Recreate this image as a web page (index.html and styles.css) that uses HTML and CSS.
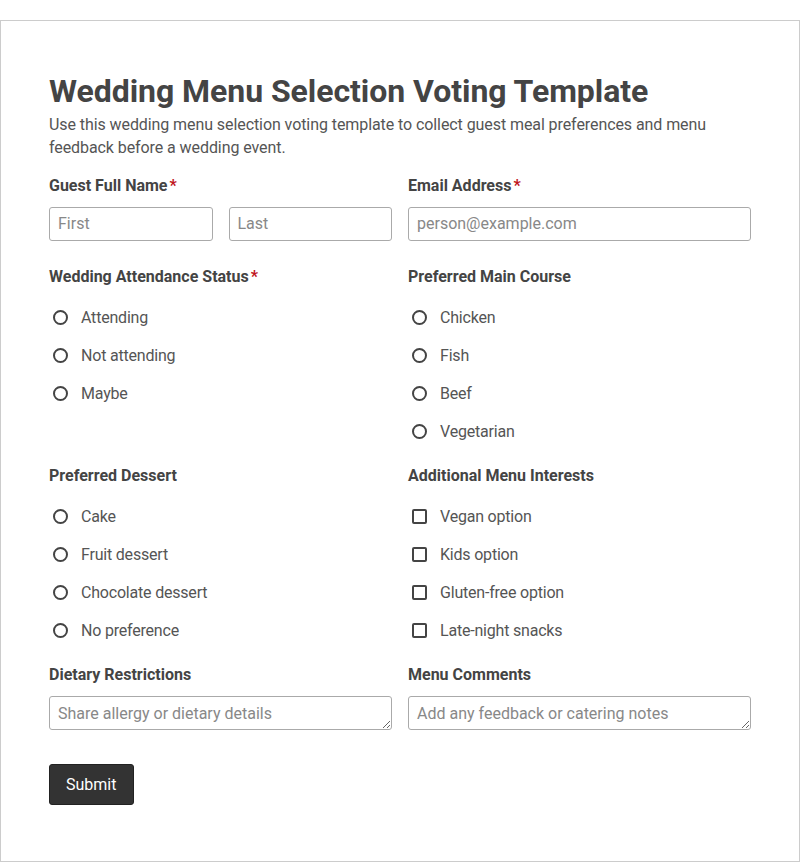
FILE: index.html
```html
<!DOCTYPE html>
<html lang="en">
<head>
    <meta charset="UTF-8">
    <meta name="viewport" content="width=device-width, initial-scale=1.0">
    <title>Wedding Menu Selection Voting Template</title>
    <link rel="stylesheet" href="styles.css">
</head>
<body>
    <form class="form-box">
        <h1>Wedding Menu Selection Voting Template</h1>
        <p class="intro">Use this wedding menu selection voting template to collect guest meal preferences and menu feedback before a wedding event.</p>

        <div class="grid">
            <div class="field text-field">
                <label class="label">Guest Full Name<span class="req">*</span></label>
                <div class="name-row">
                    <input type="text" placeholder="First">
                    <input type="text" placeholder="Last">
                </div>
            </div>
            <div class="field text-field">
                <label class="label">Email Address<span class="req">*</span></label>
                <input type="email" placeholder="person@example.com">
            </div>

            <div class="field">
                <label class="label">Wedding Attendance Status<span class="req">*</span></label>
                <div class="options">
                    <label class="option"><input type="radio" name="attend"> Attending</label>
                    <label class="option"><input type="radio" name="attend"> Not attending</label>
                    <label class="option"><input type="radio" name="attend"> Maybe</label>
                </div>
            </div>
            <div class="field">
                <label class="label">Preferred Main Course</label>
                <div class="options">
                    <label class="option"><input type="radio" name="main"> Chicken</label>
                    <label class="option"><input type="radio" name="main"> Fish</label>
                    <label class="option"><input type="radio" name="main"> Beef</label>
                    <label class="option"><input type="radio" name="main"> Vegetarian</label>
                </div>
            </div>

            <div class="field">
                <label class="label">Preferred Dessert</label>
                <div class="options">
                    <label class="option"><input type="radio" name="dessert"> Cake</label>
                    <label class="option"><input type="radio" name="dessert"> Fruit dessert</label>
                    <label class="option"><input type="radio" name="dessert"> Chocolate dessert</label>
                    <label class="option"><input type="radio" name="dessert"> No preference</label>
                </div>
            </div>
            <div class="field">
                <label class="label">Additional Menu Interests</label>
                <div class="options">
                    <label class="option"><input type="checkbox"> Vegan option</label>
                    <label class="option"><input type="checkbox"> Kids option</label>
                    <label class="option"><input type="checkbox"> Gluten-free option</label>
                    <label class="option"><input type="checkbox"> Late-night snacks</label>
                </div>
            </div>

            <div class="field">
                <label class="label">Dietary Restrictions</label>
                <textarea rows="1" placeholder="Share allergy or dietary details"></textarea>
            </div>
            <div class="field">
                <label class="label">Menu Comments</label>
                <textarea rows="1" placeholder="Add any feedback or catering notes"></textarea>
            </div>
        </div>

        <button type="submit" class="btn">Submit</button>
    </form>
</body>
</html>
```

FILE: styles.css
```css
body {
    margin: 0;
    padding-top: 20px;
    font-family: Roboto, "Liberation Sans", sans-serif;
    color: #444;
    background: #fff;
}
.form-box {
    border: 1px solid #ccc;
    padding: 50px 48px 56px;
}
h1 {
    font-size: 32px;
    line-height: 40px;
    font-weight: 700;
    margin: 0;
    color: #444;
    letter-spacing: -0.05px;
}
.intro {
    font-size: 16px;
    line-height: 23px;
    margin: 2px 0 16px;
    color: #555;
    letter-spacing: -0.08px;
}
.grid {
    display: grid;
    grid-template-columns: 343px 343px;
    column-gap: 16px;
    row-gap: 19px;
}
.label {
    display: block;
    font-size: 16px;
    line-height: 22px;
    font-weight: 700;
    color: #444;
}
.req {
    color: #c0141c;
    margin-left: 2px;
}
input[type="text"], input[type="email"], textarea {
    box-sizing: border-box;
    width: 100%;
    height: 34px;
    margin-top: 10px;
    padding: 5px 8px 7px;
    font-family: Roboto, "Liberation Sans", sans-serif;
    font-size: 16px;
    line-height: 20px;
    color: #444;
    border: 1px solid #aaa;
    border-radius: 3px;
    background: #fff;
    display: block;
}
textarea {
    resize: vertical;
    padding: 7px 8px 5px;
}
::placeholder {
    color: #888;
}
.text-field {
    padding-bottom: 6px;
}
.name-row {
    display: flex;
    gap: 16px;
}
.options {
    display: flex;
    flex-direction: column;
    gap: 8px;
    margin-top: 14px;
}
.option {
    display: flex;
    align-items: center;
    height: 30px;
    font-size: 16px;
    color: #555;
    gap: 13px;
    padding-left: 4px;
    letter-spacing: -0.2px;
}
.option input {
    appearance: none;
    -webkit-appearance: none;
    margin: 0;
    width: 15px;
    height: 15px;
    border: 2px solid #444;
    background: #fff;
    flex-shrink: 0;
}
.option input[type="radio"] {
    border-radius: 50%;
}
.option input[type="checkbox"] {
    border-radius: 2px;
}
.btn {
    margin-top: 34px;
    background: #333;
    color: #fff;
    font-family: Roboto, "Liberation Sans", sans-serif;
    font-size: 16px;
    border: 1px solid #222;
    border-radius: 3px;
    padding: 0 17px 0 16px;
    height: 41px;
    cursor: pointer;
}
```
